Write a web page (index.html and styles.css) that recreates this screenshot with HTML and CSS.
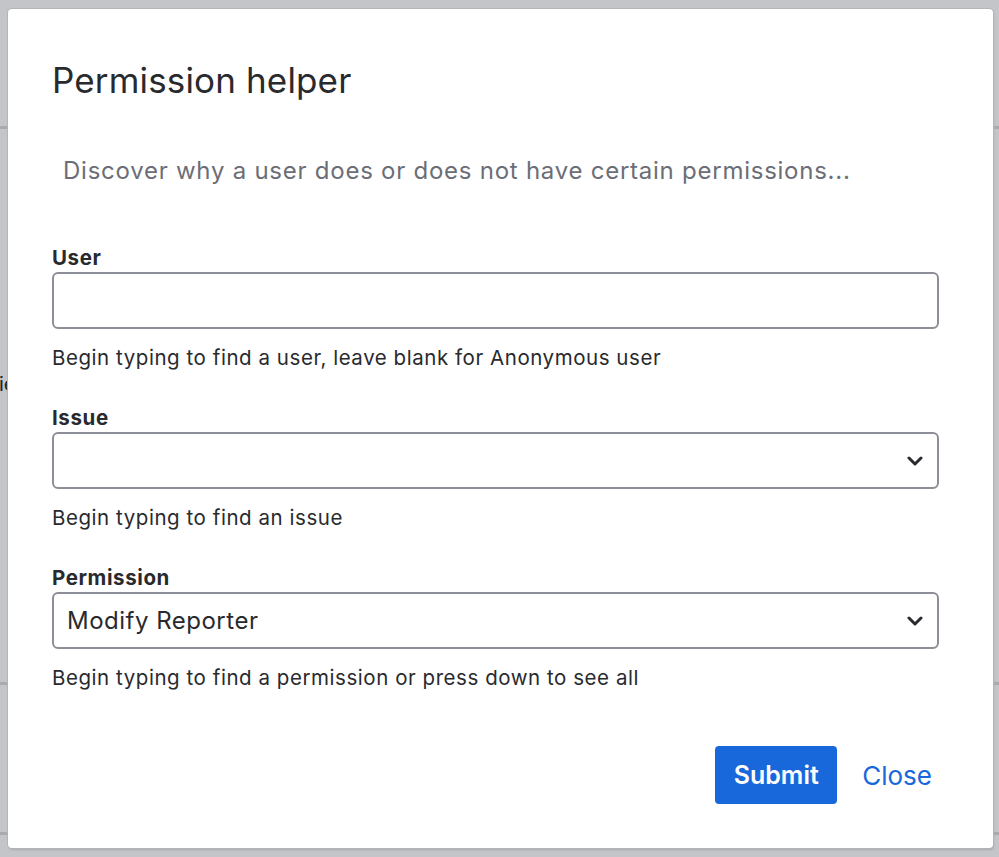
FILE: index.html
```html
<!DOCTYPE html>
<html>
    <head>
        <title>Permission helper</title>
        <link rel="stylesheet" href="styles.css">
    </head>
    <body>
        <div class="page">
            <span class="pageText">ie</span>
        </div>
        <div class="dialog">
            <h2 class="dialogTitle">Permission helper</h2>
            <p class="dialogIntro">Discover why a user does or does not have certain permissions...</p>

            <form name="permForm" class="permForm">
                <div class="field">
                    <label class="fieldLabel" for="userInput">User</label>
                    <input type="text" id="userInput" class="fieldBox" value="" />
                    <div class="fieldHelp">Begin typing to find a user, leave blank for Anonymous user</div>
                </div>

                <div class="field">
                    <label class="fieldLabel" for="issueInput">Issue</label>
                    <div class="fieldBox selectBox">
                        <span class="selectValue"></span>
                        <svg class="chevron" width="16" height="10" viewBox="0 0 16 10">
                            <path d="M2 2 L8 8 L14 2" fill="none" stroke="#292a2e" stroke-width="3" stroke-linecap="round" stroke-linejoin="round" />
                        </svg>
                    </div>
                    <div class="fieldHelp">Begin typing to find an issue</div>
                </div>

                <div class="field">
                    <label class="fieldLabel" for="permInput">Permission</label>
                    <div class="fieldBox selectBox">
                        <span class="selectValue">Modify Reporter</span>
                        <svg class="chevron" width="16" height="10" viewBox="0 0 16 10">
                            <path d="M2 2 L8 8 L14 2" fill="none" stroke="#292a2e" stroke-width="3" stroke-linecap="round" stroke-linejoin="round" />
                        </svg>
                    </div>
                    <div class="fieldHelp">Begin typing to find a permission or press down to see all</div>
                </div>

                <div class="dialogButtons">
                    <button type="button" class="btnSubmit">Submit</button>
                    <a href="#" class="btnClose">Close</a>
                </div>
            </form>
        </div>
    </body>
</html>
```

FILE: styles.css
```css
body{
    margin: 0;
    width: 999px;
    height: 857px;
    overflow: hidden;
    font-family: Inter, "Liberation Sans", sans-serif;
    background-color: #c4c5c8;
    position: relative;
}

.page{
    height: 857px;
    background:
        linear-gradient(#a9aaad, #a9aaad) 0 126px / 100% 3px no-repeat,
        linear-gradient(#a9aaad, #a9aaad) 0 682px / 100% 3px no-repeat,
        linear-gradient(#a9aaad, #a9aaad) 0 832px / 100% 3px no-repeat,
        #c4c5c8;
}

.pageText{
    display: block;
    padding-top: 372px;
    margin-left: -1px;
    font-size: 20px;
    color: #222;
}

.dialog{
    position: absolute;
    left: 8px;
    top: 9px;
    width: 985px;
    height: 839px;
    box-sizing: border-box;
    padding: 0 55px 0 44px;
    background-color: #fff;
    border-radius: 4px;
    box-shadow: 0 0 0 1px #b4b5b8, 1px 2px 2px #a9aaad;
}

.dialogTitle{
    margin: 51px 0 0 0;
    font-size: 35px;
    font-weight: 400;
    letter-spacing: 0.15px;
    line-height: 40px;
    color: #292a2e;
}

.dialogIntro{
    margin: 56px 0 0 11px;
    font-size: 24px;
    letter-spacing: 0.75px;
    line-height: 30px;
    color: #6b6e76;
}

.permForm{
    margin-top: 60px;
}

.field{
    margin-bottom: 36px;
}

.fieldLabel{
    display: block;
    font-size: 20.5px;
    font-weight: 700;
    letter-spacing: 0.6px;
    line-height: 24px;
    color: #292a2e;
    margin-bottom: 2px;
}

.fieldBox{
    display: block;
    width: 887px;
    height: 57px;
    box-sizing: border-box;
    border: 2px solid #8c8f97;
    border-radius: 6px;
    background-color: #fff;
    font-family: inherit;
    font-size: 24px;
    letter-spacing: 0.5px;
    padding: 0 13px;
}

.selectBox{
    display: flex;
    align-items: center;
    justify-content: space-between;
    padding-right: 14px;
}

.selectValue{
    color: #292a2e;
}

.fieldHelp{
    margin-top: 17px;
    font-size: 20.5px;
    letter-spacing: 0.55px;
    line-height: 24px;
    color: #292a2e;
}

.dialogButtons{
    display: flex;
    justify-content: flex-end;
    align-items: center;
    gap: 25px;
    margin-top: 56px;
    padding-right: 6px;
}

.btnSubmit{
    width: 122px;
    height: 58px;
    border: none;
    border-radius: 4px;
    background-color: #1868db;
    color: #fff;
    font-family: inherit;
    font-size: 25px;
    font-weight: 600;
}

.btnClose{
    color: #1868db;
    font-size: 26px;
    text-decoration: none;
}
```
